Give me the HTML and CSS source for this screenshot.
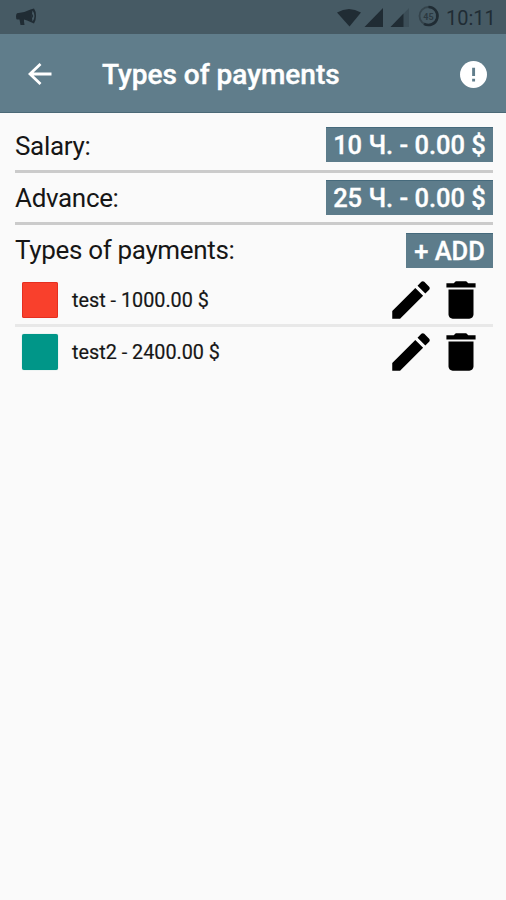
FILE: index.html
```html
<!DOCTYPE html>
<html lang="en">
<head>
<meta charset="utf-8">
<title>Types of payments</title>
<link rel="stylesheet" href="styles.css">
</head>
<body>
<svg class="defs" width="0" height="0">
  <symbol id="edit" viewBox="0 0 24 24"><path d="M3 17.25V21h3.75L17.81 9.94l-3.75-3.75L3 17.25zM20.71 7.04c.39-.39.39-1.02 0-1.41l-2.34-2.34c-.39-.39-1.02-.39-1.41 0l-1.83 1.83 3.75 3.75 1.83-1.83z"/></symbol>
  <symbol id="trash" viewBox="0 0 24 24"><path d="M6 19c0 1.1.9 2 2 2h8c1.1 0 2-.9 2-2V7H6v12zM19 4h-3.500l-1-1h-5l-1 1H5v2h14V4z"/></symbol>
</svg>
<div class="status">
  <svg class="horn" viewBox="0 0 21 18"><path d="M1 5.200Q8 5 14.500 1.500L18 .500Q20 3 20 8Q20 13 18 15.500L14.500 14Q11 12 8 11.500L8 13.500L8.500 17H4.500L3.500 11.500H1Q0 11 0 8.500Q0 6 1 5.200z"/><path class="mouth" d="M16.500 2.500Q18.500 5 18.500 8Q18.500 11 16.500 13.500Q14.800 8 16.500 2.500z"/><path d="M15.500 5.500q3.200 2.500 0 5z"/></svg>
  <svg class="signals" viewBox="0 0 104 24">
    <path d="M0 4.500Q12-2.500 24 4.500L12.500 18.500z"/>
    <path d="M27.500 19L46 0V19z"/>
    <path d="M54 19L72 0V19z" opacity=".25"/>
    <path d="M53.500 19L66.500 5.500V19z"/>
    <circle cx="91.500" cy="8" r="9" fill="none" stroke="#34434b" stroke-width="1.800"/>
    <path d="M91.500-1A9 9 0 1 1 87 15.800" fill="none" stroke="#202c34" stroke-width="2.600"/>
    <text x="91.500" y="11.500" text-anchor="middle">45</text>
  </svg>
  <span class="clock">10:11</span>
</div>
<header class="bar">
  <svg class="back" viewBox="0 0 24 22"><path d="M23.500 11H2M12.500 1L2 11L12.500 21"/></svg>
  <h1>Types of payments</h1>
  <svg class="info" viewBox="0 0 26 26"><circle cx="13" cy="13" r="13"/><path d="M11.700 6.500h2.800v8h-2.800zM11.700 17h2.800v2.800h-2.800z"/></svg>
</header>
<main>
  <section class="row"><span class="label">Salary:</span><button class="wide">10 Ч. - 0.00 $</button></section>
  <section class="row"><span class="label">Advance:</span><button class="wide">25 Ч. - 0.00 $</button></section>
  <section class="row heading"><span class="label">Types of payments:</span><button class="add">+ ADD</button></section>
  <ul>
    <li><i class="swatch red"></i><span class="name">test - 1000.00 $</span><svg class="icon"><use href="#edit"/></svg><svg class="icon"><use href="#trash"/></svg></li>
    <li><i class="swatch teal"></i><span class="name">test2 - 2400.00 $</span><svg class="icon"><use href="#edit"/></svg><svg class="icon"><use href="#trash"/></svg></li>
  </ul>
</main>
</body>
</html>
```
FILE: styles.css
```css
* { box-sizing: border-box; }
body { margin: 0; height: 900px; background: #fafafa; font-family: Roboto, "Liberation Sans", sans-serif; color: #161616; overflow: hidden; }
.defs { position: absolute; }
.status { height: 34px; background: #465a64; display: flex; align-items: flex-start; padding: 8px 11px 0 16px; fill: #202c34; }
.horn { width: 21px; height: 18px; }
.horn .mouth { fill: #465a64; }
.signals { width: 104px; height: 24px; margin-left: auto; overflow: visible; }
.signals text { font-size: 9px; font-weight: 700; fill: #2c3941; }
.clock { width: 49px; margin-left: 5px; font-size: 20px; line-height: 20px; white-space: nowrap; color: #202c34; }
.bar { height: 79px; background: #607d8b; border-bottom: 1px solid #4b6977; display: flex; align-items: center; padding: 2px 19px 0 28px; }
.back { width: 24px; height: 22px; fill: none; stroke: #fff; stroke-width: 2.8; }
h1 { margin: 2px 0 0 50px; font-size: 28px; line-height: 34px; font-weight: 500; color: #fff; white-space: nowrap; -webkit-text-stroke: .4px #fff; }
.info { width: 27px; height: 27px; margin-left: auto; fill: #fff; }
.info path { fill: #607d8b; }
main { padding: 6px 13px 0 15px; }
.row { height: 52.5px; display: flex; align-items: center; justify-content: space-between; border-bottom: 3px solid #cbcbcb; }
.row:first-child { height: 53.5px; padding-top: 1px; }
.heading { border-bottom: 0; height: 50px; }
.label { padding-top: 1.5px; font-size: 26px; line-height: 34px; white-space: nowrap; letter-spacing: -.33px; }
.heading .label { padding-top: 0; }
button { height: 35px; border: 0; padding: 0; background: #5d7c8b; color: #fff; font: 500 25.5px/37px Roboto, "Liberation Sans", sans-serif; text-align: center; white-space: nowrap; box-shadow: inset 0 1px #466a7c; -webkit-text-stroke: .35px #fff; }
.wide { width: 167px; }
.add { width: 87px; }
ul { list-style: none; margin: 0; padding: 0; }
li { height: 52px; display: flex; align-items: center; padding: 0 7.5px 0 7px; border-bottom: 3px solid #e8e8e8; }
li:last-child { border-bottom: 0; height: 50px; }
.swatch { width: 36px; height: 36px; border-radius: 2px; margin-right: 14px; }
.red { background: #f9402c; box-shadow: inset 0 0 0 1px #e52f20; }
.teal { background: #009688; box-shadow: 0 0 1px #7cbdb4; }
.name { flex: 1; font-size: 19.8px; line-height: 24px; padding-top: 2px; white-space: nowrap; -webkit-text-stroke: .2px; }
.icon { width: 50px; height: 50px; flex: none; fill: #000; }
```
